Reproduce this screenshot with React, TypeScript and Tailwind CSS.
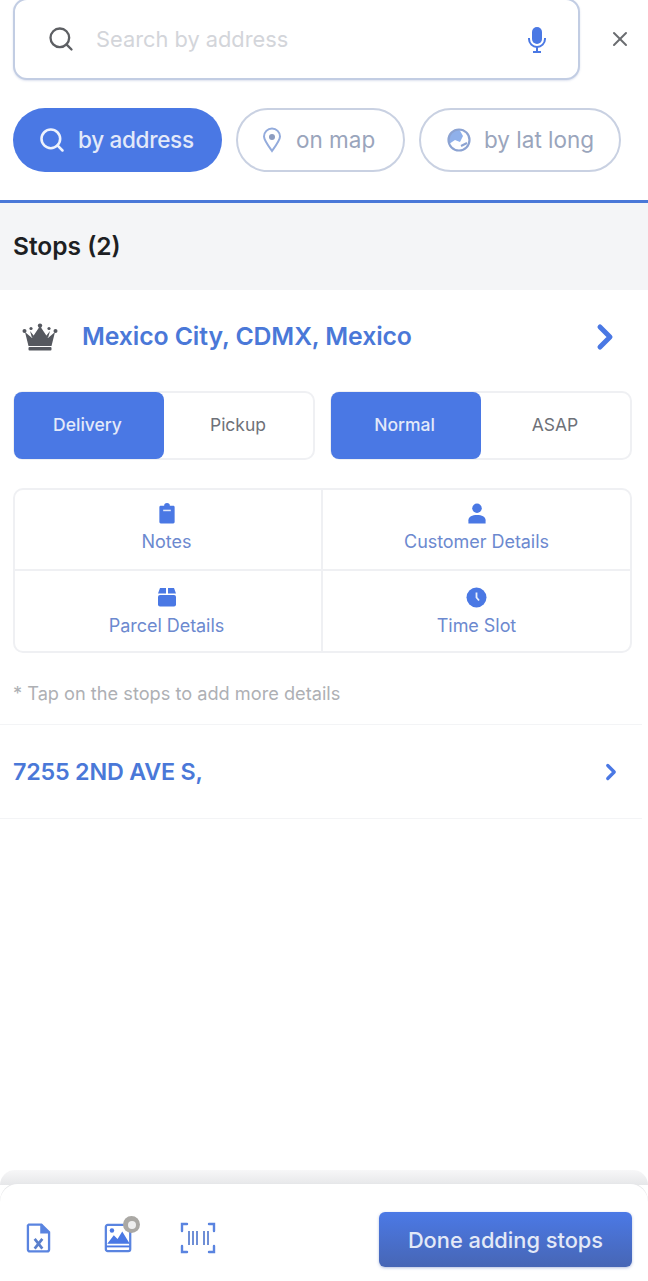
import React from "react";
import { Search, X, ChevronRight } from "lucide-react";

const BLUE = "#4a78e4";

function Crown() {
  return (
    <svg width="36" height="28" viewBox="0 0 36 28" fill="#55585f">
      <path d="M3 9 L10 15 L18 3 L26 15 L33 9 L29.5 23 H6.5 Z" />
      <path d="M8 8 L12 13 L10 15 Z M28 8 L24 13 L26 15 Z" />
      <rect x="6.5" y="24" width="23" height="3.5" rx="1" />
      <circle cx="2.5" cy="8" r="2" />
      <circle cx="33.5" cy="8" r="2" />
      <circle cx="18" cy="2.6" r="2.2" />
      <circle cx="9" cy="5.5" r="1.6" />
      <circle cx="27" cy="5.5" r="1.6" />
    </svg>
  );
}

function Segment({ on, off }: { on: string; off: string }) {
  return (
    <div className="flex h-[69px] w-[302px] rounded-[10px] border-2 border-[#eff0f3] bg-white">
      <div className="-m-[1px] flex w-[150px] items-center justify-center rounded-[8px] bg-[#4a78e4] pr-[3px] text-[17.5px] font-medium text-[#e3e9f9]">
        {on}
      </div>
      <div className="flex flex-1 items-center justify-center text-[17.5px] text-[#6e7178]">{off}</div>
    </div>
  );
}

function Cell({ icon, label, cls }: { icon: React.ReactNode; label: string; cls: string }) {
  return (
    <div className={`flex flex-col items-center ${cls}`}>
      <div className="flex h-[23px] items-center justify-center">{icon}</div>
      <div className="mt-[5px] text-[18px] leading-[24px] tracking-[-0.05px] text-[#6c89cf]">{label}</div>
    </div>
  );
}

export default function App() {
  return (
    <div
      className="flex h-[1281px] w-[648px] flex-col overflow-hidden bg-white"
      style={{ fontFamily: '"Inter", "Liberation Sans", sans-serif' }}
    >
      {/* Search */}
      <div className="flex h-[200px] flex-col">
        <div className="-mt-[2px] flex items-center pl-[13px]">
          <div className="flex h-[82px] w-[567px] items-center rounded-[14px] border-2 border-[#c2cde3] bg-white pl-[33px] pr-[31px] shadow-[0_1px_2px_rgba(120,140,190,0.25)]">
            <Search size={28} strokeWidth={2} color="#5d5f63" className="-ml-[1px]" />
            <span className="ml-[21px] mt-[1px] flex-1 text-[21.8px] text-[#d3d5da]">Search by address</span>
            <svg width="20" height="27" viewBox="0 0 20 27" fill="none">
              <rect x="5" y="1" width="10" height="17" rx="5" fill={BLUE} />
              <path d="M2 12 V13 A8 8 0 0 0 18 13 V12" stroke={BLUE} strokeWidth="2" />
              <path d="M10 21 V26 M6 26 H14" stroke={BLUE} strokeWidth="2" />
            </svg>
          </div>
          <X size={24} strokeWidth={2} color="#6a6c70" className="ml-[28px]" />
        </div>
        <div className="mt-[28px] flex pl-[13px]">
          <div className="flex h-[64px] w-[209px] items-center rounded-full bg-[#4a78e4] pl-[25px]">
            <Search size={28} strokeWidth={2.2} color="#eef2fc" />
            <span className="ml-[12px] text-[22.5px] font-medium tracking-[-0.3px] text-[#e3e9f9]">by address</span>
          </div>
          <div className="ml-[14px] flex h-[64px] w-[169px] items-center rounded-full border-2 border-[#c9d1e2] pl-[23px]">
            <svg width="22" height="26" viewBox="0 0 22 26" fill="none">
              <path d="M11 24 C6 17 3 13 3 9.5 A8 8 0 0 1 19 9.5 C19 13 16 17 11 24 Z" stroke="#93abdc" strokeWidth="2" />
              <circle cx="11" cy="10" r="3" fill="#8c9cc0" />
            </svg>
            <span className="ml-[13px] text-[22.5px] text-[#9aa5bc]">on map</span>
          </div>
          <div className="ml-[14px] flex h-[64px] w-[202px] items-center rounded-full border-2 border-[#c9d1e2] pl-[25px]">
            <svg width="26" height="26" viewBox="0 0 26 26" fill="none">
              <path d="M13 2 A11 11 0 0 0 3 17 L9 13 L14 15 L17 9 L13 2 Z" fill="#8fb0ea" />
              <circle cx="13" cy="13" r="10.5" stroke="#8ca3d2" strokeWidth="2.2" />
              <path d="M15 19 L21 16" stroke="#8ca3d2" strokeWidth="2" />
            </svg>
            <span className="ml-[12px] text-[22.5px] text-[#9aa5bc]">by lat long</span>
          </div>
        </div>
      </div>

      {/* Stops header */}
      <div className="flex h-[90px] items-center border-t-[3px] border-[#4a78d8] bg-[#f4f5f7] pl-[13px] text-[24.5px] font-semibold text-[#1d1f23]">
        Stops (2)
      </div>

      {/* Stop 1 */}
      <div className="flex h-[94px] items-center pl-[22px] pr-[27px]">
        <Crown />
        <span className="ml-[24px] flex-1 text-[24.8px] font-semibold tracking-[-0.1px] text-[#4a78d8]">
          Mexico City, CDMX, Mexico
        </span>
        <ChevronRight size={40} strokeWidth={3} color={BLUE} className="-mr-[4px]" />
      </div>

      <div className="mt-[7px] flex gap-[15px] pl-[13px]">
        <Segment on="Delivery" off="Pickup" />
        <Segment on="Normal" off="ASAP" />
      </div>

      {/* Details grid */}
      <div className="ml-[13px] mt-[28px] grid h-[165px] w-[619px] grid-cols-[308px_1fr] grid-rows-2 rounded-[10px] border-2 border-[#eff0f3]">
        <Cell
          cls="border-r-2 border-b-2 border-[#eff0f3] pr-[3px] pt-[12px]"
          label="Notes"
          icon={
            <svg width="18" height="21" viewBox="0 0 18 22" fill={BLUE}>
              <path d="M2 3 H6 A3 3 0 0 1 12 3 H16 A1.5 1.5 0 0 1 17 4.5 V20 A1.5 1.5 0 0 1 15.5 21.5 H2.5 A1.5 1.5 0 0 1 1 20 V4.5 A1.5 1.5 0 0 1 2 3 Z" />
              <rect x="5" y="7" width="8" height="1.6" fill="#dfe7fa" />
            </svg>
          }
        />
        <Cell
          cls="border-b-2 border-[#eff0f3] pt-[12px]"
          label="Customer Details"
          icon={
            <svg width="20" height="21" viewBox="0 0 20 22" fill={BLUE}>
              <circle cx="10" cy="5.5" r="5" />
              <path d="M1 21.5 V18 C1 14.5 5 12.5 10 12.5 C15 12.5 19 14.5 19 18 V21.5 Z" />
            </svg>
          }
        />
        <Cell
          cls="border-r-2 border-[#eff0f3] pr-[3px] pt-[15px]"
          label="Parcel Details"
          icon={
            <svg width="20" height="20" viewBox="0 0 20 20" fill={BLUE}>
              <path d="M3 1 H9 V6.5 H1 Z M11 1 H17 L19 6.5 H11 Z" />
              <rect x="1" y="8" width="18" height="11.5" rx="2" />
            </svg>
          }
        />
        <Cell
          cls="pt-[15px]"
          label="Time Slot"
          icon={
            <svg width="21" height="21" viewBox="0 0 21 21">
              <circle cx="10.5" cy="10.5" r="10" fill={BLUE} />
              <path d="M10.5 5.5 V10.5 L13 13.5" stroke="#eaf0fc" strokeWidth="1.8" fill="none" />
            </svg>
          }
        />
      </div>

      <div className="mt-[28px] pl-[13px] text-[18.2px] leading-[24px] text-[#aeb0b4]">
        * Tap on the stops to add more details
      </div>

      {/* Stop 2 */}
      <div className="mt-[19px] flex h-[95px] w-[642px] items-center border-y border-[#f3f4f6] pl-[13px] pr-[18px]">
        <span className="mt-[2px] flex-1 text-[23.3px] font-semibold tracking-[-0.2px] text-[#4a78d8]">7255 2ND AVE S,</span>
        <ChevronRight size={26} strokeWidth={3} color={BLUE} />
      </div>

      <div className="flex-1" />

      {/* Bottom bar */}
      <div className="h-[15px] rounded-t-[20px] bg-gradient-to-b from-[#f7f7f8] to-[#e6e7e9]" />
      <div className="-mt-[1px] flex h-[97px] items-start rounded-t-[18px] bg-white pl-[26px] pr-[16px] pt-[28px] shadow-[0_-1px_0_#e6e7e9]">
        <svg className="mt-[10px]" width="25" height="32" viewBox="0 0 26 32" fill="none" stroke="#5a84e0" strokeWidth="2.4">
          <path d="M3 2 H16 L24 10 V28 A2 2 0 0 1 22 30 H4 A2 2 0 0 1 2 28 V3 Z" />
          <path d="M16 2 V10 H24" fill="#5a84e0" />
          <path d="M9 17 L17 27 M17 17 L9 27" strokeWidth="2.8" stroke="#5a7fcc" />
        </svg>
        <div className="relative ml-[53px] mt-[11px]">
          <svg width="29" height="30" viewBox="0 0 30 32" fill="none">
            <rect x="1.5" y="2" width="26" height="28" rx="2" stroke="#5a84e0" strokeWidth="2.4" />
            <path d="M3 22 L10 13 L14 17 L19 9 L27 22 Z" fill={BLUE} />
            <circle cx="8" cy="8" r="2.4" fill={BLUE} />
            <rect x="2" y="24" width="25" height="2" fill={BLUE} />
          </svg>
          <div className="absolute -right-[7px] -top-[7px] flex h-[17px] w-[17px] items-center justify-center rounded-full bg-[#aaa8a4]">
            <div className="h-[8px] w-[8px] rounded-full bg-[#eeeeee]" />
          </div>
        </div>
        <svg className="ml-[47px] mt-[10px]" width="36" height="32" viewBox="0 0 36 32" fill="none" stroke="#5a84e0" strokeWidth="2.4">
          <path d="M7 2 H2 V9 M29 2 H34 V9 M7 30 H2 V24 M29 30 H34 V24" strokeLinecap="round" />
          <path d="M9 9 V23 M13 9 V23 M17 9 V23 M24 9 V23 M28 9 V23" strokeWidth="2" stroke="#6f8fd6" />
        </svg>
        <div className="ml-auto flex h-[55px] w-[253px] items-center justify-center rounded-[6px] bg-gradient-to-b from-[#4b79e6] to-[#4766b5] pt-[1px] text-[21.8px] font-medium text-[#e3e9f7] shadow-[0_1px_3px_rgba(70,100,180,0.4)]">
          Done adding stops
        </div>
      </div>
    </div>
  );
}
